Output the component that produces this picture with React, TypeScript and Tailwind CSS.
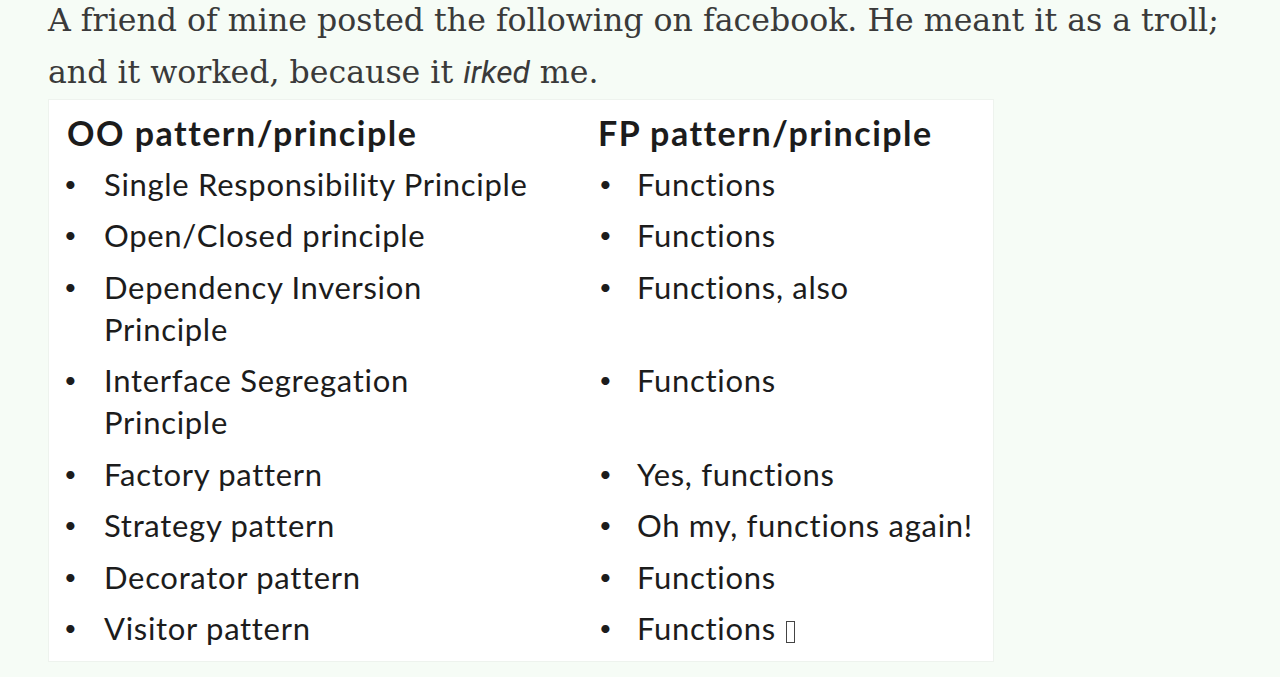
import React from "react";

const rows: [React.ReactNode, React.ReactNode][] = [
  ["Single Responsibility Principle", "Functions"],
  ["Open/Closed principle", "Functions"],
  [<>Dependency Inversion<br />Principle</>, "Functions, also"],
  [<>Interface Segregation<br />Principle</>, "Functions"],
  ["Factory pattern", "Yes, functions"],
  ["Strategy pattern", "Oh my, functions again!"],
  ["Decorator pattern", "Functions"],
  ["Visitor pattern", <>Functions <span className="inline-block w-[9px] h-[22px] border border-[#444] align-[-3px] ml-[1px]"></span></>],
];

function Item({ children, right }: { children: React.ReactNode; right?: boolean }) {
  return (
    <div className="flex">
      <span className={(right ? "w-[39px] pl-[1px]" : "w-[40px] -ml-[3px]") + " shrink-0 text-[22px] leading-[42px]"}>•</span>
      <span>{children}</span>
    </div>
  );
}

export default function App() {
  return (
    <div className="min-h-[677px] bg-[#f6fcf6] pl-[48px] overflow-hidden">
      <p
        className="text-[#3a3a3a] text-[31.6px] leading-[52px] w-[1210px] mt-[-6px]"
        style={{ fontFamily: '"DejaVu Serif", serif' }}
      >
        A friend of mine posted the following on facebook. He meant it as a troll; and it worked, because it{" "}
        <em style={{ fontFamily: 'Roboto, sans-serif' }}>irked</em> me.
      </p>
      <div
        className="mt-0 w-[946px] bg-white border border-[#eef3ee] pl-[18px] pt-[13px] pb-[12px] text-[#1c1c1c]"
        style={{ fontFamily: 'Lato, sans-serif' }}
      >
        <div className="grid grid-cols-[531px_1fr] text-[31px] tracking-[0.7px] leading-[42px] gap-y-[9.5px]">
          <div className="font-bold text-[34px] tracking-[1.5px] leading-[40px]">OO pattern/principle</div>
          <div className="font-bold text-[34px] tracking-[1.5px] leading-[40px]">FP pattern/principle</div>
          {rows.map(([a, b], i) => (
            <React.Fragment key={i}>
              <Item>{a}</Item>
              <Item right>{b}</Item>
            </React.Fragment>
          ))}
        </div>
      </div>
    </div>
  );
}
